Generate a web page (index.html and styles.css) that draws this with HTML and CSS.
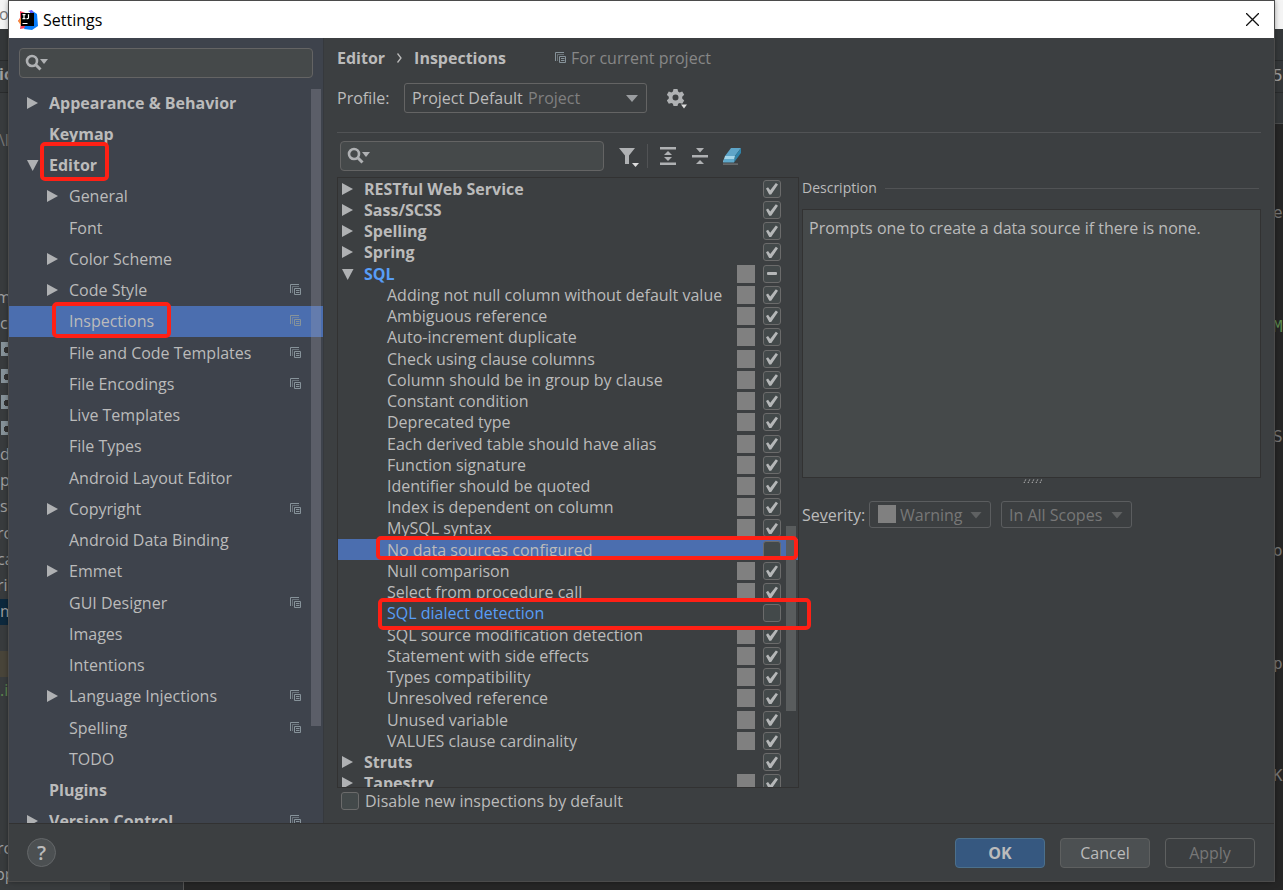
FILE: index.html
```html
<!DOCTYPE html>
<html lang="en">
<head>
<meta charset="utf-8">
<title>Settings</title>
<link rel="stylesheet" href="styles.css">
</head>
<body>
<svg class="sprite" aria-hidden="true">
  <symbol id="right" viewBox="0 0 12 12"><path d="M0 0v12l11-6z" fill="#afb1b3"/></symbol>
  <symbol id="down" viewBox="0 0 12 12"><path d="M0 1h11.500L5.700 12z" fill="#afb1b3"/></symbol>
  <symbol id="copy" viewBox="0 0 12 12"><path d="M.5 9V.5H9" fill="none" stroke="#87939a"/><path d="M2.500 9V2.500H9" fill="none" stroke="#87939a" stroke-opacity=".6"/><path d="M4.500 4.500h6v6h-6zM6 6.500h3.500M6 8.500h3.500" fill="none" stroke="#87939a"/></symbol>
  <symbol id="search" viewBox="0 0 24 18"><circle cx="7" cy="7" r="5" fill="none" stroke="#afb1b3" stroke-width="2.600"/><path d="M10.500 10.500l5 5" stroke="#afb1b3" stroke-width="3"/><path d="M15 5h8l-4 5z" fill="#afb1b3"/></symbol>
</svg>

<div class="backdrop" aria-hidden="true">
  <div class="ide-left">
    <div class="ide-title"></div><div class="ide-bar"></div><div class="ide-bar"></div>
  </div>
  <div class="ide-bottom"></div>
  <div class="ide-right">
    <div class="ide-title"></div><div class="ide-bar"></div><div class="ide-bar"></div><div class="ide-tabs"></div>
  </div>
  <span class="mark selected-file"></span><span class="mark tinted-file"></span>
  <span class="frag dim" style="top:4px;left:-1px">o</span>
  <span class="frag strong" style="top:64px;left:-1px">ic</span>
  <span class="frag dim" style="top:130px;left:-1px">\lo</span>
  <span class="frag" style="top:287px;left:-4px">m</span>
  <span class="frag" style="top:313px">c</span>
  <i class="file" style="top:342px"></i><i class="file" style="top:369px"></i><i class="file" style="top:395px"></i><i class="file" style="top:421px"></i>
  <span class="frag" style="top:444px">d</span>
  <span class="frag" style="top:470px">p</span>
  <span class="frag" style="top:496px">s</span>
  <span class="frag" style="top:523px;left:-3px">rc</span>
  <span class="frag" style="top:549px;left:-3px">ca</span>
  <span class="frag" style="top:575px;left:-3px">rin</span>
  <span class="frag" style="top:601px">m</span>
  <span class="frag green" style="top:680px">.i</span>
  <span class="frag" style="top:838px;left:-3px">rc</span>
  <span class="frag" style="top:864px;left:-5px">pp</span>
  <span class="frag code" style="top:66px">5</span>
  <span class="frag code dim" style="top:203px">e</span>
  <span class="frag code green" style="top:317px">M</span>
  <span class="frag code dim" style="top:427px">St</span>
  <span class="frag code dim" style="top:541px">o</span>
  <span class="frag code dim" style="top:654px">p</span>
  <span class="frag code dim" style="top:766px">K</span>
</div>

<main class="dialog">
  <header class="titlebar">
    <svg class="logo" viewBox="0 0 20 20"><path d="M2 1l8 3-2 14-6 1 1-6-3-2 2-3z" fill="#f4405f"/><path d="M0 11l4-5v11z" fill="#f68b3d"/><path d="M13 0l6 4 1 12-6 4-8-1z" fill="#087cfa"/><path d="M10 1l4-1 2 4z" fill="#6b57ff"/><path d="M3 3h13v13H3z"/><path d="M4.500 4.700h3M6 4.700v4M4.500 8.700h3M10.500 4.200v3.500q0 1-1.200 1h-.8M4.500 13.500h5" fill="none" stroke="#fff" stroke-width="1.200"/></svg>
    <h1 class="title">Settings</h1>
    <button class="close" aria-label="Close"><svg viewBox="0 0 12 12"><path d="M0 0l12 12M12 0L0 12" stroke="#111" stroke-width="1.200"/></svg></button>
  </header>

  <div class="body">
    <aside class="sidebar">
      <div class="search side-search"><svg class="search-icon"><use href="#search"/></svg><input type="search" aria-label="Search settings"></div>
      <div class="side-view">
        <ul class="side-tree">
          <li class="top"><svg class="arrow"><use href="#right"/></svg><span>Appearance &amp; Behavior</span></li>
          <li class="top"><i class="arrow"></i><span>Keymap</span></li>
          <li class="top"><svg class="arrow"><use href="#down"/></svg><span>Editor</span></li>
          <li><svg class="arrow"><use href="#right"/></svg><span>General</span></li>
          <li><i class="arrow"></i><span>Font</span></li>
          <li><svg class="arrow"><use href="#right"/></svg><span>Color Scheme</span></li>
          <li><svg class="arrow"><use href="#right"/></svg><span>Code Style</span><svg class="copy"><use href="#copy"/></svg></li>
          <li class="selected"><i class="arrow"></i><span>Inspections</span><svg class="copy"><use href="#copy"/></svg></li>
          <li><i class="arrow"></i><span>File and Code Templates</span><svg class="copy"><use href="#copy"/></svg></li>
          <li><i class="arrow"></i><span>File Encodings</span><svg class="copy"><use href="#copy"/></svg></li>
          <li><i class="arrow"></i><span>Live Templates</span></li>
          <li><i class="arrow"></i><span>File Types</span></li>
          <li><i class="arrow"></i><span>Android Layout Editor</span></li>
          <li><svg class="arrow"><use href="#right"/></svg><span>Copyright</span><svg class="copy"><use href="#copy"/></svg></li>
          <li><i class="arrow"></i><span>Android Data Binding</span></li>
          <li><svg class="arrow"><use href="#right"/></svg><span>Emmet</span></li>
          <li><i class="arrow"></i><span>GUI Designer</span><svg class="copy"><use href="#copy"/></svg></li>
          <li><i class="arrow"></i><span>Images</span></li>
          <li><i class="arrow"></i><span>Intentions</span></li>
          <li><svg class="arrow"><use href="#right"/></svg><span>Language Injections</span><svg class="copy"><use href="#copy"/></svg></li>
          <li><i class="arrow"></i><span>Spelling</span><svg class="copy"><use href="#copy"/></svg></li>
          <li><i class="arrow"></i><span>TODO</span></li>
          <li class="top"><i class="arrow"></i><span>Plugins</span></li>
          <li class="top"><svg class="arrow"><use href="#right"/></svg><span>Version Control</span><svg class="copy"><use href="#copy"/></svg></li>
        </ul>
        <div class="side-thumb"></div>
      </div>
    </aside>

    <section class="content">
      <div class="crumbs"><b>Editor</b><svg class="chevron" viewBox="0 0 5 10"><path d="M.5.5L4 5 .5 9.500" fill="none" stroke="#bbb" stroke-width="1.300"/></svg><b>Inspections</b><span class="scope"><svg class="copy"><use href="#copy"/></svg>For current project</span></div>
      <div class="profile">
        <label for="profile">Profile:</label>
        <div class="combo profile-combo"><select id="profile"><option>Project Default</option></select><span class="combo-hint">Project</span></div>
        <button class="tool" aria-label="Profile actions"><svg class="gear" viewBox="0 0 20 20"><path fill-rule="evenodd" fill="#afb1b3" d="M6.500 0h4l.6 2.600 1.500.8L15.200 2.500l2 3.300-2 1.900v1.800l2 1.900-2 3.300-2.600-.8-1.500.8-.6 2.300h-4l-.6-2.300-1.500-.8-2.600.8-2-3.300 2-1.900V7.700l-2-1.900 2-3.300 2.600.9 1.500-.8zM8.500 5.600a3 3 0 1 0 0 6 3 3 0 0 0 0-6z"/><path d="M14 15.500h6l-3 4z" fill="#ddd"/></svg></button>
      </div>
      <hr class="rule">
      <div class="toolbar">
        <div class="search"><svg class="search-icon"><use href="#search"/></svg><input type="search" aria-label="Search inspections"></div>
        <button class="tool filter" aria-label="Filter"><svg viewBox="0 0 20 20"><path d="M0 1h16l-6 7.500V17H6V8.500z" fill="#afb1b3"/><path d="M13 16h7l-3.500 4z" fill="#ddd"/></svg></button>
        <span class="tool-sep"></span>
        <button class="tool" aria-label="Expand all"><svg viewBox="0 0 20 20"><path d="M2 1h16v2.500H2zM2 16.500h16V19H2zM10 5l4 4H6zM10 15l4-4H6z" fill="#afb1b3"/></svg></button>
        <button class="tool" aria-label="Collapse all"><svg viewBox="0 0 20 20"><path d="M2 9h16v2.500H2zM6 2h8l-4 4.500zM6 18h8l-4-4z" fill="#afb1b3"/></svg></button>
        <button class="tool" aria-label="Reset"><svg viewBox="0 0 20 20"><path d="M9 2h10l-6 8H3z" fill="#5ea5c8"/><path d="M3 10h10l-1 6H1z" fill="#a2d5e9"/><path d="M2 13h11l-1 3.500H1z" fill="#5fa9cb"/><path d="M13 10l6-8v5l-7 9.500z" fill="#2f84aa"/><path d="M1 17.500h15v1.200H1z" fill="#777a7c"/></svg></button>
      </div>

      <div class="panes">
        <div class="left-pane">
          <div class="list-view">
            <ul class="list">
              <li class="group"><svg class="arrow"><use href="#right"/></svg><span>RESTful Web Service</span><input type="checkbox" aria-label="RESTful Web Service" checked></li>
              <li class="group"><svg class="arrow"><use href="#right"/></svg><span>Sass/SCSS</span><input type="checkbox" aria-label="Sass/SCSS" checked></li>
              <li class="group"><svg class="arrow"><use href="#right"/></svg><span>Spelling</span><input type="checkbox" aria-label="Spelling" checked></li>
              <li class="group"><svg class="arrow"><use href="#right"/></svg><span>Spring</span><input type="checkbox" aria-label="Spring" checked></li>
              <li class="group changed"><svg class="arrow"><use href="#down"/></svg><span>SQL</span><i class="level"></i><input type="checkbox" class="mixed" aria-label="SQL"></li>
              <li><label for="i1">Adding not null column without default value</label><i class="level"></i><input type="checkbox" id="i1" checked></li>
              <li><label for="i2">Ambiguous reference</label><i class="level"></i><input type="checkbox" id="i2" checked></li>
              <li><label for="i3">Auto-increment duplicate</label><i class="level"></i><input type="checkbox" id="i3" checked></li>
              <li><label for="i4">Check using clause columns</label><i class="level"></i><input type="checkbox" id="i4" checked></li>
              <li><label for="i5">Column should be in group by clause</label><i class="level"></i><input type="checkbox" id="i5" checked></li>
              <li><label for="i6">Constant condition</label><i class="level"></i><input type="checkbox" id="i6" checked></li>
              <li><label for="i7">Deprecated type</label><i class="level"></i><input type="checkbox" id="i7" checked></li>
              <li><label for="i8">Each derived table should have alias</label><i class="level"></i><input type="checkbox" id="i8" checked></li>
              <li><label for="i9">Function signature</label><i class="level"></i><input type="checkbox" id="i9" checked></li>
              <li><label for="i10">Identifier should be quoted</label><i class="level"></i><input type="checkbox" id="i10" checked></li>
              <li><label for="i11">Index is dependent on column</label><i class="level"></i><input type="checkbox" id="i11" checked></li>
              <li><label for="i12">MySQL syntax</label><i class="level"></i><input type="checkbox" id="i12" checked></li>
              <li class="selected"><label for="i13">No data sources configured</label><input type="checkbox" id="i13"></li>
              <li><label for="i14">Null comparison</label><i class="level"></i><input type="checkbox" id="i14" checked></li>
              <li><label for="i15">Select from procedure call</label><i class="level"></i><input type="checkbox" id="i15" checked></li>
              <li class="changed"><label for="i16">SQL dialect detection</label><input type="checkbox" id="i16"></li>
              <li><label for="i17">SQL source modification detection</label><i class="level"></i><input type="checkbox" id="i17" checked></li>
              <li><label for="i18">Statement with side effects</label><i class="level"></i><input type="checkbox" id="i18" checked></li>
              <li><label for="i19">Types compatibility</label><i class="level"></i><input type="checkbox" id="i19" checked></li>
              <li><label for="i20">Unresolved reference</label><i class="level"></i><input type="checkbox" id="i20" checked></li>
              <li><label for="i21">Unused variable</label><i class="level"></i><input type="checkbox" id="i21" checked></li>
              <li><label for="i22">VALUES clause cardinality</label><i class="level"></i><input type="checkbox" id="i22" checked></li>
              <li class="group"><svg class="arrow"><use href="#right"/></svg><span>Struts</span><input type="checkbox" aria-label="Struts" checked></li>
              <li class="group"><svg class="arrow"><use href="#right"/></svg><span>Tapestry</span><i class="level"></i><input type="checkbox" aria-label="Tapestry" checked></li>
            </ul>
            <div class="list-thumb"></div>
          </div>
          <div class="default-row"><input type="checkbox" id="disable-new"><label for="disable-new">Disable new inspections by default</label></div>
        </div>

        <div class="right-pane">
          <div class="heading"><h2>Description</h2><span></span></div>
          <div class="description">Prompts one to create a data source if there is none.</div>
          <svg class="grip" viewBox="0 0 20 6"><path d="M2 5l2-4M6 5l2-4M10 5l2-4M14 5l2-4M18 5l2-4" stroke="#bbb" stroke-dasharray="1.500 1"/></svg>
          <div class="severity">
            <label for="severity">Se<u>v</u>erity:</label>
            <div class="combo severity-combo"><select id="severity" disabled><option>Warning</option></select><i class="level"></i></div>
            <div class="combo scope-combo"><select aria-label="Scope" disabled><option>In All Scopes</option></select></div>
          </div>
        </div>
      </div>
    </section>
  </div>

  <footer class="footer">
    <button class="help" aria-label="Help">?</button>
    <button class="btn primary">OK</button>
    <button class="btn">Cancel</button>
    <button class="btn" disabled>Apply</button>
  </footer>

  <i class="callout callout-editor"></i>
  <i class="callout callout-inspections"></i>
  <i class="callout callout-sources"></i>
  <i class="callout callout-dialect"></i>
</main>
</body>
</html>
```
FILE: styles.css
```css
* { box-sizing: border-box; }
html, body { height: 100%; }
body { margin: 0; overflow: hidden; background: #262626; color: #bbb; font: 16px/20px "Open Sans", "Noto Sans", sans-serif; }
ul, h1, h2 { margin: 0; padding: 0; list-style: none; font-weight: normal; }
button, input, select { margin: 0; font: inherit; color: inherit; }
.sprite { position: absolute; width: 0; height: 0; }

/* IDE window behind the dialog */
.backdrop { position: absolute; inset: 0; overflow: hidden; }
.ide-left { position: absolute; inset: 0 auto 0 0; width: 110px; background: #393c3e; }
.ide-right { position: absolute; inset: 0 0 0 auto; width: 20px; }
.ide-title { height: 29px; background: #f5f5f5; }
.ide-bar { height: 32px; background: #35383a; border-bottom: 1px solid #2a2c2d; }
.ide-tabs { height: 31px; background: #35383a; border-bottom: 1px solid #4a4c4d; }
.ide-bottom { position: absolute; inset: auto auto 0 110px; width: 74px; height: 10px; background: #303234; border-right: 1px solid #555; }
.frag { position: absolute; left: 0; white-space: nowrap; color: #a0a0a0; }
.frag.strong { font-weight: bold; }
.frag.dim { color: #777; }
.frag.green { color: #5d8a50; }
.frag.code { left: auto; right: 0; width: 10px; font-family: "DejaVu Sans Mono", monospace; }
.mark { position: absolute; left: 0; width: 9px; height: 26px; }
.selected-file { top: 599px; background: #0d293e; }
.tinted-file { top: 651px; background: #49453a; }
.file { position: absolute; left: 1px; width: 10px; height: 14px; background: radial-gradient(circle at 6px 8px, #333 3px, #87939a 3px); }

/* Dialog frame */
.dialog { position: absolute; inset: 1px 9px 9px; display: flex; flex-direction: column; background: #3c3f41; box-shadow: 0 0 6px rgba(0, 0, 0, .5); outline: 1px solid #4b4b4b; }
.titlebar { display: flex; align-items: center; flex: none; height: 37px; padding: 0 15px 0 9px; background: #fff; color: #000; }
.logo { width: 20px; height: 20px; margin-right: 5px; }
.title { flex: 1; font-size: 16px; line-height: 20px; }
.close { display: flex; padding: 0; border: 0; background: none; }
.close svg { width: 13px; height: 13px; }
.body { display: flex; flex: 1; min-height: 0; }

/* Search fields */
.search { display: flex; align-items: center; height: 30px; padding-left: 6px; border: 1px solid #646464; border-radius: 4px; background: #45494a; }
.search-icon { flex: none; width: 24px; height: 18px; }
.search input { flex: 1; min-width: 0; border: 0; outline: 0; background: none; }

/* Settings tree */
.sidebar { display: flex; flex-direction: column; flex: none; width: 315px; padding-top: 10px; border-right: 1px solid #36393d; background: #3e434c; }
.side-search { margin: 0 10px 9px; padding-left: 5px; }
.side-view { position: relative; flex: 1; min-height: 0; overflow: hidden; }
.side-tree { display: grid; grid-template-rows: repeat(24, 1fr); height: 750px; }
.side-tree li { display: flex; align-items: center; padding: 0 21px 0 38px; }
.side-tree li.top { padding-left: 18px; font-weight: bold; }
.side-tree span { flex: 1; }
.side-tree .selected { background: #4b6eaf; }
.arrow { flex: none; width: 12px; height: 12px; margin-right: 10px; }
.copy { width: 12px; height: 12px; }
.side-thumb { position: absolute; top: 2px; right: 2px; width: 10px; height: 637px; background: rgba(160, 160, 170, .3); }

/* Inspections page */
.content { display: flex; flex-direction: column; flex: 1; min-width: 0; padding: 10px 13px 12px; }
.crumbs { display: flex; align-items: center; height: 20px; }
.chevron { width: 5px; height: 10px; margin: 0 12px; }
.scope { display: flex; align-items: center; gap: 4px; margin-left: 49px; color: #878787; }
.profile { display: flex; align-items: center; height: 30px; margin-top: 15px; }
.profile label { width: 67px; }
.combo { position: relative; display: flex; }
.combo::after { content: ""; position: absolute; top: 50%; right: 9px; width: 12px; height: 7px; margin-top: -3px; background: #9a9da0; clip-path: polygon(0 0, 100% 0, 50% 100%); pointer-events: none; }
.combo select { width: 100%; padding: 0 7px; border: 1px solid #646464; border-radius: 3px; appearance: none; background: none; opacity: 1; }
.combo select:disabled { border-color: #5b5d5f; color: #777; }
.combo:has(:disabled)::after { background: #5f6162; }
.profile-combo { width: 243px; height: 30px; }
.combo-hint { position: absolute; top: 5px; left: 124px; color: #808080; pointer-events: none; }
.tool { display: flex; padding: 0; border: 0; background: none; }
.tool svg { width: 20px; height: 20px; }
.profile .tool { margin: 2px 0 0 20px; }
.rule { width: 100%; height: 1px; margin: 19px 0 8px; border: 0; background: #515355; }
.toolbar { display: flex; align-items: center; height: 30px; padding-left: 3px; gap: 12px; }
.toolbar .search { width: 264px; }
.filter { margin: 2px -4px 0 3px; }
.tool-sep { width: 1px; height: 24px; margin-right: -2px; background: #515355; }
.panes { display: grid; grid-template-columns: 462px minmax(0, 1fr); gap: 3px; flex: 1; min-height: 0; margin-top: 6px; }
.left-pane { display: flex; flex-direction: column; min-height: 0; }
.list-view { position: relative; flex: 1; min-height: 0; overflow: hidden; border: 1px solid #323232; }
.list { display: grid; grid-template-rows: repeat(29, 1fr); height: 616px; }
.list li { display: flex; align-items: center; gap: 8px; min-height: 0; padding: 0 17px 0 49px; }
.list li.group { padding-left: 4px; font-weight: bold; }
.list label, .list span { flex: 1; }
.list .arrow { margin-right: 2px; }
.list .changed { color: #589df6; }
.list .selected { background: #4b6eaf; }
.level { width: 18px; height: 18px; background: #808080; }
input[type="checkbox"] { display: flex; flex: none; width: 18px; height: 18px; border: 1px solid #6b6b6b; border-radius: 3px; appearance: none; background: #43494a; }
input[type="checkbox"]:checked::before { content: ""; width: 12px; height: 12px; margin: 2px; background: #b5b7b8; clip-path: polygon(0 50%, 17% 39%, 35% 64%, 82% 4%, 100% 16%, 43% 100%, 27% 100%); }
.mixed::before { content: ""; width: 10px; height: 3px; margin: 6px 3px; border-radius: 1px; background: #b5b7b8; }
.list-thumb { position: absolute; top: 348px; right: 2px; width: 10px; height: 185px; background: #595c5d; }
.default-row { display: flex; align-items: center; gap: 6px; padding: 3px 0 0 4px; }
.right-pane { display: flex; flex-direction: column; }
.heading { display: flex; align-items: center; gap: 8px; }
.heading h2 { font-size: 14px; line-height: 22px; }
.heading span { flex: 1; height: 1px; margin-right: 2px; background: #515355; }
.description { height: 269px; margin-top: 10px; padding: 8px 6px; border: 1px solid #323232; background: #45494a; }
.grip { width: 20px; height: 6px; align-self: center; }
.severity { display: flex; align-items: center; margin-top: 17px; }
.severity label { width: 67px; }
.severity .combo { height: 27px; }
.severity-combo { width: 122px; margin-right: 10px; }
.severity-combo select { padding-left: 30px; }
.severity-combo .level { position: absolute; top: 4px; left: 9px; }
.scope-combo { width: 131px; }

/* Footer */
.footer { display: flex; align-items: center; flex: none; gap: 15px; height: 58px; padding: 0 19px 0 18px; border-top: 1px solid #323232; }
.help { width: 29px; height: 29px; margin-right: auto; padding: 0; border: 1px solid #646769; border-radius: 50%; background: #4c5052; font-size: 20px; font-weight: 600; }
.btn { width: 90px; height: 30px; padding: 0; border: 1px solid #5e6060; border-radius: 4px; background: #4c5052; }
.btn.primary { border-color: #4c708c; background: #365880; font-weight: bold; }
.btn:disabled { background: none; color: #777; }

/* Red highlight frames drawn over the dialog */
.callout { position: absolute; border: 4px solid #ff2015; border-radius: 5px; pointer-events: none; }
.callout-editor { top: 141px; left: 31px; width: 69px; height: 39px; }
.callout-inspections { top: 301px; left: 43px; width: 119px; height: 36px; }
.callout-sources { top: 535px; left: 367px; width: 422px; height: 24px; }
.callout-dialect { top: 597px; left: 369px; width: 433px; height: 32px; }
```
